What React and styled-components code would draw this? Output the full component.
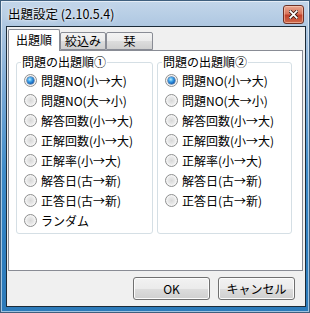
import React from "react";
import styled, { createGlobalStyle } from "styled-components";

const GlobalStyle = createGlobalStyle`
  html, body {
    margin: 0;
    padding: 0;
    background: #ffffff;
  }
  * {
    box-sizing: border-box;
  }
`;

const UI_FONT = `"Noto Sans CJK JP", "Noto Sans", "Liberation Sans", sans-serif`;

const Window = styled.div`
  width: 310px;
  height: 313px;
  border: 1px solid #3f5f7e;
  padding: 0 3px 5px 5px;
  display: flex;
  flex-direction: column;
  font-family: ${UI_FONT};
  font-size: 12px;
  color: #000;
  background: linear-gradient(
    180deg,
    #c3d6ea 0,
    #aec7e1 26px,
    #79a9d6 90px,
    #3f8cc9 170px,
    #2f7fc0 240px,
    #2c7ab9 100%
  );
  box-shadow: inset 0 0 0 1px rgba(255, 255, 255, 0.55);
`;

const TitleBar = styled.div`
  height: 25px;
  display: flex;
  align-items: flex-start;
  padding-left: 2px;
`;

const Title = styled.div`
  margin-top: 5px;
  line-height: 16px;
  font-size: 12.5px;
  text-shadow: 0 0 6px rgba(255, 255, 255, 0.9), 0 0 2px #fff;
`;

const CloseButton = styled.div`
  margin: 4px 2px 0 auto;
  width: 21px;
  height: 19px;
  border: 1px solid #6e3126;
  border-radius: 3px;
  background: linear-gradient(180deg, #e9a791 0, #d8765d 45%, #c2402a 55%, #cf6a4c 100%);
  box-shadow: inset 0 0 0 1px rgba(255, 220, 200, 0.5);
  display: flex;
  align-items: center;
  justify-content: center;
`;

const Client = styled.div`
  flex: 1;
  border: 1px solid #1c2b38;
  background: #f0f0f0;
  padding: 2px 0 6px 0;
  display: flex;
  flex-direction: column;
`;

const TabStrip = styled.div`
  display: flex;
  align-items: flex-end;
  padding-left: 1px;
  height: 21px;
`;

const Tab = styled.div`
  position: relative;
  width: ${(p) => p.$w}px;
  height: ${(p) => (p.$active ? 22 : 18)}px;
  margin-bottom: ${(p) => (p.$active ? -1 : 0)}px;
  border: 1px solid #898c95;
  border-bottom: ${(p) => (p.$active ? "none" : "1px solid #898c95")};
  border-radius: 2px 2px 0 0;
  background: ${(p) =>
    p.$active ? "#ffffff" : "linear-gradient(180deg, #f3f3f3 0, #ebebeb 50%, #dddddd 51%, #cfcfcf 100%)"};
  z-index: ${(p) => (p.$active ? 1 : 0)};
  display: flex;
  justify-content: center;
  padding-top: ${(p) => (p.$active ? 2 : 0)}px;
  line-height: 16px;
  font-size: 12px;
`;

const Panel = styled.div`
  margin: 0 2px 0 1px;
  height: 221px;
  border: 1px solid #898c95;
  background: #ffffff;
  display: grid;
  grid-template-columns: 137px 135px;
  column-gap: 4px;
  align-items: stretch;
  padding: 3px 0 0 7px;
`;

const Group = styled.fieldset`
  margin: 0;
  height: 180px;
  padding: 0 4px 2px 4px;
  border: 1px solid #d5dfe5;
  border-radius: 3px;
  min-width: 0;
`;

const GroupLabel = styled.legend`
  padding: 0 1px;
  line-height: 16px;
  font-size: 12px;
`;

const RadioRow = styled.label`
  height: 20px;
  display: flex;
  align-items: center;
  gap: 4px;
  padding-left: 3px;
  white-space: nowrap;
`;

const RadioDot = styled.span`
  position: relative;
  flex: none;
  width: 13px;
  height: 13px;
  border-radius: 50%;
  border: 1px solid #8e8f8f;
  background: radial-gradient(circle at 50% 50%, #d8d8d8 0, #e9e9e9 45%, #f8f8f8 75%, #ffffff 100%);
  box-shadow: inset 0 0 0 1px #f4f4f4;

  &::after {
    content: "";
    display: ${(p) => (p.$checked ? "block" : "none")};
    position: absolute;
    left: 2px;
    top: 2px;
    width: 7px;
    height: 7px;
    border-radius: 50%;
    background: radial-gradient(circle at 40% 35%, #b9ecff 0, #3fa4ea 35%, #1261b8 70%, #0b3e86 100%);
    box-shadow: 0 0 0 0.5px #1c4f8a;
  }
`;

const ButtonRow = styled.div`
  margin-top: 6px;
  display: flex;
  justify-content: flex-end;
  gap: 8px;
  padding-right: 10px;
`;

const Button = styled.button`
  width: ${(p) => p.$w}px;
  height: 23px;
  border: 1px solid #707070;
  border-radius: 3px;
  background: linear-gradient(180deg, #f2f2f2 0, #ebebeb 50%, #dddddd 51%, #cfcfcf 100%);
  box-shadow: inset 0 0 0 1px #fcfcfc;
  font-family: ${UI_FONT};
  font-size: 12px;
  line-height: 16px;
  color: #000;
  padding: 0;
`;

const orderOptions = [
  "問題NO(小→大)",
  "問題NO(大→小)",
  "解答回数(小→大)",
  "正解回数(小→大)",
  "正解率(小→大)",
  "解答日(古→新)",
  "正答日(古→新)",
];

function RadioGroup({ label, options }) {
  return (
    <Group>
      <GroupLabel>{label}</GroupLabel>
      {options.map((opt, i) => (
        <RadioRow key={opt}>
          <RadioDot $checked={i === 0} />
          <span>{opt}</span>
        </RadioRow>
      ))}
    </Group>
  );
}

export default function App() {
  return (
    <>
      <GlobalStyle />
      <Window>
        <TitleBar>
          <Title>出題設定 (2.10.5.4)</Title>
          <CloseButton>
            <svg width="9" height="9" viewBox="0 0 9 9">
              <path
                d="M1 1 L8 8 M8 1 L1 8"
                stroke="#3a1a14"
                strokeWidth="3.4"
                strokeLinecap="square"
              />
              <path
                d="M1.2 1.2 L7.8 7.8 M7.8 1.2 L1.2 7.8"
                stroke="#ffffff"
                strokeWidth="1.8"
                strokeLinecap="square"
              />
            </svg>
          </CloseButton>
        </TitleBar>
        <Client>
          <TabStrip>
            <Tab $active $w={52}>出題順</Tab>
            <Tab $w={46}>絞込み</Tab>
            <Tab $w={47}>栞</Tab>
          </TabStrip>
          <Panel>
            <RadioGroup label="問題の出題順①" options={[...orderOptions, "ランダム"]} />
            <RadioGroup label="問題の出題順②" options={orderOptions} />
          </Panel>
          <ButtonRow>
            <Button $w={77}>OK</Button>
            <Button $w={77}>キャンセル</Button>
          </ButtonRow>
        </Client>
      </Window>
    </>
  );
}
